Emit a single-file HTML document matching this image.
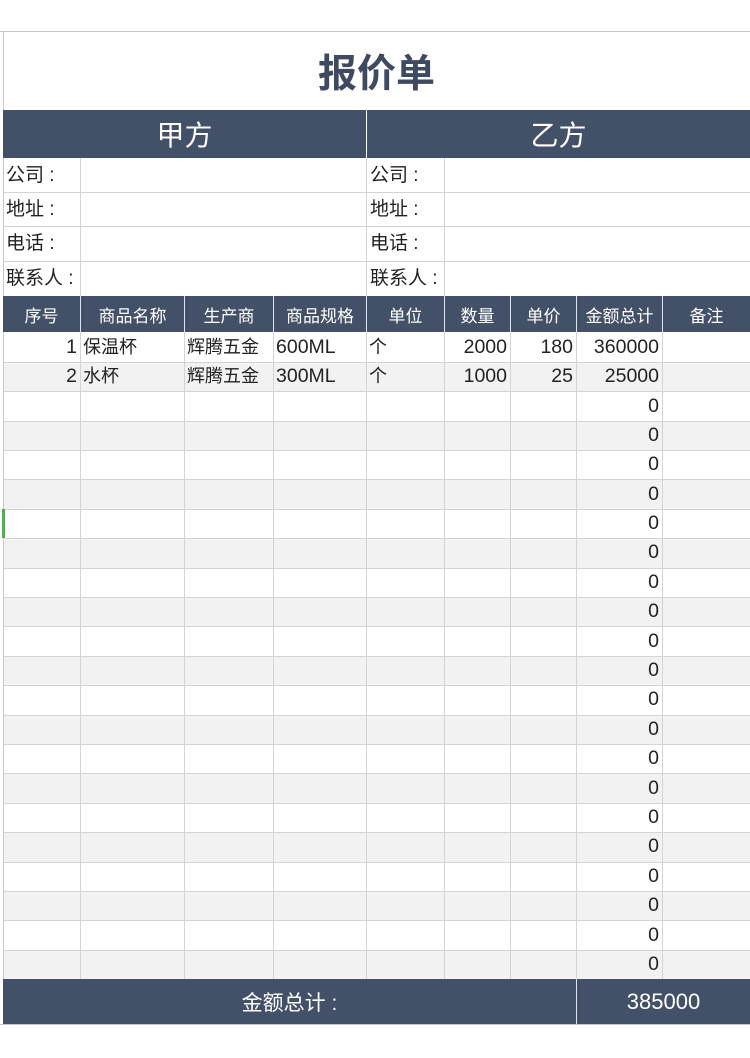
<!DOCTYPE html>
<html><head><meta charset="utf-8"><style>
*{margin:0;padding:0;box-sizing:border-box}
body{width:750px;height:1058px;background:#fff;position:relative;overflow:hidden;font-family:"Liberation Sans","Noto Sans CJK SC",sans-serif;color:#222}
.a{position:absolute}
.hd{background:#435168;color:#fff}
.c{display:flex;align-items:center;justify-content:center}
.vl{position:absolute;width:1px;background:#d4d4d4}
.hl{position:absolute;height:1px;background:#d4d4d4;left:3px;width:747px}
.t{position:absolute;font-size:18px;line-height:29px;white-space:nowrap}
.r{text-align:right;font-size:19.5px}
.k{letter-spacing:1px}
</style></head><body>
<div class="a" style="left:0;top:31px;width:750px;height:1px;background:#c8c8c8"></div>
<div class="a" style="left:3px;top:31px;width:1px;height:993px;background:#c8c8c8"></div>
<div class="a c" style="left:3px;top:32px;width:747px;height:78px;font-size:39px;font-weight:bold;color:#3d4a60">报价单</div>
<div class="a hd c" style="left:3px;top:110px;width:363px;height:48px;font-size:28px">甲方</div>
<div class="a hd c" style="left:367px;top:110px;width:383px;height:48px;font-size:28px">乙方</div>
<div class="hl" style="top:192px"></div><div class="hl" style="top:226px"></div><div class="hl" style="top:261px"></div>
<div class="vl" style="left:80px;top:158px;height:138px"></div>
<div class="vl" style="left:366px;top:158px;height:138px"></div>
<div class="vl" style="left:444px;top:158px;height:138px"></div>
<div class="t" style="left:6px;top:161px;font-size:19px">公司&nbsp;:</div>
<div class="t" style="left:6px;top:195px;font-size:19px">地址&nbsp;:</div>
<div class="t" style="left:6px;top:229px;font-size:19px">电话&nbsp;:</div>
<div class="t" style="left:6px;top:264px;font-size:19px">联系人&nbsp;:</div>
<div class="t" style="left:370px;top:161px;font-size:19px">公司&nbsp;:</div>
<div class="t" style="left:370px;top:195px;font-size:19px">地址&nbsp;:</div>
<div class="t" style="left:370px;top:229px;font-size:19px">电话&nbsp;:</div>
<div class="t" style="left:370px;top:264px;font-size:19px">联系人&nbsp;:</div>
<div class="a hd" style="left:3px;top:296px;width:747px;height:36px"></div>
<div class="a hd c" style="left:3px;top:296px;width:77px;height:36px;font-size:17px">序号</div>
<div class="a hd c" style="left:81px;top:296px;width:103px;height:36px;font-size:17px">商品名称</div>
<div class="a hd c" style="left:185px;top:296px;width:88px;height:36px;font-size:17px">生产商</div>
<div class="a hd c" style="left:274px;top:296px;width:92px;height:36px;font-size:17px">商品规格</div>
<div class="a hd c" style="left:367px;top:296px;width:77px;height:36px;font-size:17px">单位</div>
<div class="a hd c" style="left:445px;top:296px;width:65px;height:36px;font-size:17px">数量</div>
<div class="a hd c" style="left:511px;top:296px;width:65px;height:36px;font-size:17px">单价</div>
<div class="a hd c" style="left:577px;top:296px;width:85px;height:36px;font-size:17px">金额总计</div>
<div class="a hd c" style="left:663px;top:296px;width:87px;height:36px;font-size:17px">备注</div>
<div class="a" style="left:80px;top:296px;width:1px;height:36px;background:#e0e4ea"></div>
<div class="a" style="left:184px;top:296px;width:1px;height:36px;background:#e0e4ea"></div>
<div class="a" style="left:273px;top:296px;width:1px;height:36px;background:#e0e4ea"></div>
<div class="a" style="left:366px;top:296px;width:1px;height:36px;background:#e0e4ea"></div>
<div class="a" style="left:444px;top:296px;width:1px;height:36px;background:#e0e4ea"></div>
<div class="a" style="left:510px;top:296px;width:1px;height:36px;background:#e0e4ea"></div>
<div class="a" style="left:576px;top:296px;width:1px;height:36px;background:#e0e4ea"></div>
<div class="a" style="left:662px;top:296px;width:1px;height:36px;background:#e0e4ea"></div>
<div class="a" style="left:4px;top:362px;width:746px;height:29px;background:#f2f2f2"></div>
<div class="a" style="left:4px;top:421px;width:746px;height:29px;background:#f2f2f2"></div>
<div class="a" style="left:4px;top:479px;width:746px;height:30px;background:#f2f2f2"></div>
<div class="a" style="left:4px;top:538px;width:746px;height:30px;background:#f2f2f2"></div>
<div class="a" style="left:4px;top:597px;width:746px;height:29px;background:#f2f2f2"></div>
<div class="a" style="left:4px;top:656px;width:746px;height:29px;background:#f2f2f2"></div>
<div class="a" style="left:4px;top:715px;width:746px;height:29px;background:#f2f2f2"></div>
<div class="a" style="left:4px;top:773px;width:746px;height:30px;background:#f2f2f2"></div>
<div class="a" style="left:4px;top:832px;width:746px;height:30px;background:#f2f2f2"></div>
<div class="a" style="left:4px;top:891px;width:746px;height:29px;background:#f2f2f2"></div>
<div class="a" style="left:4px;top:950px;width:746px;height:29px;background:#f2f2f2"></div>
<div class="hl" style="top:362px"></div><div class="hl" style="top:391px"></div><div class="hl" style="top:421px"></div><div class="hl" style="top:450px"></div><div class="hl" style="top:479px"></div><div class="hl" style="top:509px"></div><div class="hl" style="top:538px"></div><div class="hl" style="top:568px"></div><div class="hl" style="top:597px"></div><div class="hl" style="top:626px"></div><div class="hl" style="top:656px"></div><div class="hl" style="top:685px"></div><div class="hl" style="top:715px"></div><div class="hl" style="top:744px"></div><div class="hl" style="top:773px"></div><div class="hl" style="top:803px"></div><div class="hl" style="top:832px"></div><div class="hl" style="top:862px"></div><div class="hl" style="top:891px"></div><div class="hl" style="top:920px"></div><div class="hl" style="top:950px"></div>
<div class="vl" style="left:80px;top:332px;height:647px"></div>
<div class="vl" style="left:184px;top:332px;height:647px"></div>
<div class="vl" style="left:273px;top:332px;height:647px"></div>
<div class="vl" style="left:366px;top:332px;height:647px"></div>
<div class="vl" style="left:444px;top:332px;height:647px"></div>
<div class="vl" style="left:510px;top:332px;height:647px"></div>
<div class="vl" style="left:576px;top:332px;height:647px"></div>
<div class="vl" style="left:662px;top:332px;height:647px"></div>
<div class="a" style="left:2px;top:509px;width:3px;height:29px;background:#4caf50"></div>
<div class="t r" style="left:3px;width:74px;top:333px">1</div>
<div class="t" style="left:83px;top:333px">保温杯</div>
<div class="t" style="left:187px;top:333px">辉腾五金</div>
<div class="t" style="left:276px;top:333px;font-size:19.5px">600ML</div>
<div class="t" style="left:369px;top:333px">个</div>
<div class="t r" style="left:445px;width:62px;top:333px">2000</div>
<div class="t r" style="left:511px;width:62px;top:333px">180</div>
<div class="t r" style="left:577px;width:82px;top:333px">360000</div>
<div class="t r" style="left:3px;width:74px;top:362px">2</div>
<div class="t" style="left:83px;top:362px">水杯</div>
<div class="t" style="left:187px;top:362px">辉腾五金</div>
<div class="t" style="left:276px;top:362px;font-size:19.5px">300ML</div>
<div class="t" style="left:369px;top:362px">个</div>
<div class="t r" style="left:445px;width:62px;top:362px">1000</div>
<div class="t r" style="left:511px;width:62px;top:362px">25</div>
<div class="t r" style="left:577px;width:82px;top:362px">25000</div>
<div class="t r" style="left:577px;width:82px;top:392px">0</div>
<div class="t r" style="left:577px;width:82px;top:421px">0</div>
<div class="t r" style="left:577px;width:82px;top:450px">0</div>
<div class="t r" style="left:577px;width:82px;top:480px">0</div>
<div class="t r" style="left:577px;width:82px;top:509px">0</div>
<div class="t r" style="left:577px;width:82px;top:538px">0</div>
<div class="t r" style="left:577px;width:82px;top:568px">0</div>
<div class="t r" style="left:577px;width:82px;top:597px">0</div>
<div class="t r" style="left:577px;width:82px;top:627px">0</div>
<div class="t r" style="left:577px;width:82px;top:656px">0</div>
<div class="t r" style="left:577px;width:82px;top:685px">0</div>
<div class="t r" style="left:577px;width:82px;top:715px">0</div>
<div class="t r" style="left:577px;width:82px;top:744px">0</div>
<div class="t r" style="left:577px;width:82px;top:774px">0</div>
<div class="t r" style="left:577px;width:82px;top:803px">0</div>
<div class="t r" style="left:577px;width:82px;top:832px">0</div>
<div class="t r" style="left:577px;width:82px;top:862px">0</div>
<div class="t r" style="left:577px;width:82px;top:891px">0</div>
<div class="t r" style="left:577px;width:82px;top:921px">0</div>
<div class="t r" style="left:577px;width:82px;top:950px">0</div>
<div class="a hd c" style="left:3px;top:979px;width:573px;height:45px;font-size:21px">金额总计&nbsp;:</div>
<div class="a" style="left:576px;top:979px;width:1px;height:45px;background:#e0e4ea"></div>
<div class="a hd c" style="left:577px;top:979px;width:173px;height:45px;font-size:22px">385000</div>
<div class="a" style="left:0;top:1024px;width:750px;height:1px;background:#c8c8c8"></div>
</body></html>
